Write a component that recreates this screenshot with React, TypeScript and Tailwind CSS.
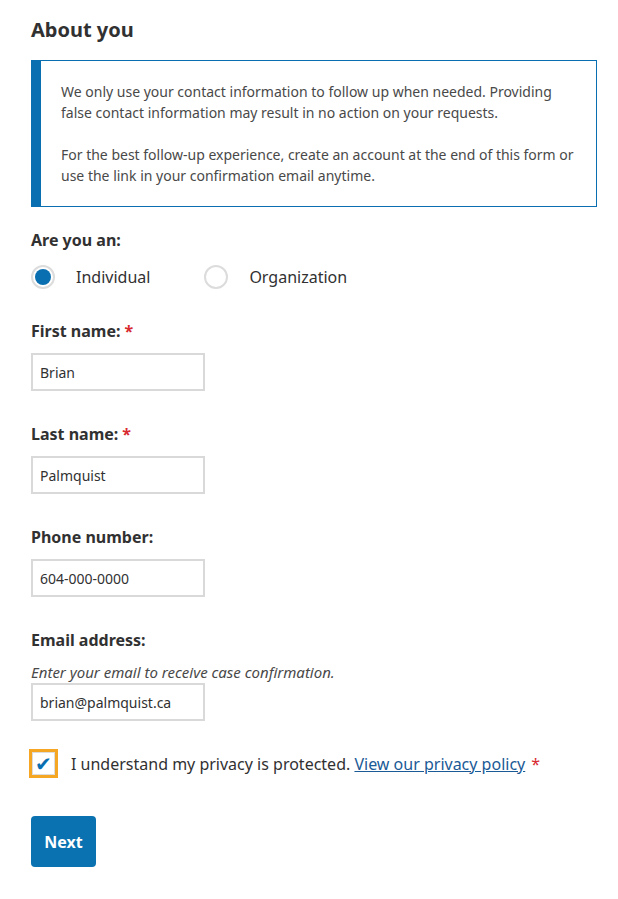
import { ReactNode } from 'react';

function Label({ children, required }: { children: ReactNode; required?: boolean }) {
  return (
    <div className="text-[16px] font-bold leading-[22px] text-[#313132]">
      {children}
      {required && <span className="ml-1 text-[#d8292f]">*</span>}
    </div>
  );
}

function TextInput({ value }: { value: string }) {
  return (
    <input
      type="text"
      defaultValue={value}
      className="h-[38px] w-[174px] border-2 border-[#d9d9d9] bg-white px-[7px] text-[14px] text-[#313132] outline-none"
    />
  );
}

function Radio({ label, checked }: { label: string; checked?: boolean }) {
  return (
    <label className="flex items-center">
      <span className="flex h-[24px] w-[24px] items-center justify-center rounded-full border-2 border-[#dcdcdc] bg-white">
        {checked && <span className="h-[16px] w-[16px] rounded-full bg-[#0a6fb0]" />}
      </span>
      <span className="ml-[21px] text-[16px] text-[#313132]">{label}</span>
    </label>
  );
}

export default function App() {
  return (
    <div className="min-h-[899px] bg-white px-[31px] pt-[16px] font-['Noto_Sans',sans-serif] text-[#313132]">
      <h2 className="text-[20px] font-bold leading-[28px]">About you</h2>

      <div className="mt-[16px] flex w-[566px] border border-[#0a6fb0] border-l-[10px]">
        <div className="px-[20px] pt-[20px] pb-[20px] text-[14px] leading-[21px] text-[#494949]">
          <p>
            We only use your contact information to follow up when needed. Providing false contact
            information may result in no action on your requests.
          </p>
          <p className="mt-[21px]">
            For the best follow-up experience, create an account at the end of this form or use the
            link in your confirmation email anytime.
          </p>
        </div>
      </div>

      <div className="mt-[22px]">
        <Label>Are you an:</Label>
        <div className="mt-[14px] flex gap-[54px]">
          <Radio label="Individual" checked />
          <Radio label="Organization" />
        </div>
      </div>

      <div className="mt-[31px] flex flex-col gap-[11px]">
        <Label required>First name:</Label>
        <TextInput value="Brian" />
      </div>

      <div className="mt-[32px] flex flex-col gap-[11px]">
        <Label required>Last name:</Label>
        <TextInput value="Palmquist" />
      </div>

      <div className="mt-[32px] flex flex-col gap-[11px]">
        <Label>Phone number:</Label>
        <TextInput value="604-000-0000" />
      </div>

      <div className="mt-[32px] flex flex-col">
        <Label>Email address:</Label>
        <div className="mt-[11px] text-[15px] italic leading-[20px] text-[#494949]">
          Enter your email to receive case confirmation.
        </div>
        <div className="mt-[1px]">
          <TextInput value="brian@palmquist.ca" />
        </div>
      </div>

      <div className="mt-[28px] -ml-[2px] flex items-center">
        <span className="flex h-[29px] w-[29px] items-center justify-center border-[3px] border-[#f5a623] bg-white">
          <span className="flex h-[23px] w-[23px] items-center justify-center border border-[#dcdcdc] text-[20px] leading-none text-[#0a6fb0]">
            ✔
          </span>
        </span>
        <span className="ml-[13px] text-[16px] text-[#313132]">
          I understand my privacy is protected.{' '}
          <a href="#" className="text-[#1a5a96] underline">
            View our privacy policy
          </a>
          <span className="ml-[6px] text-[#d8292f]">*</span>
        </span>
      </div>

      <button
        type="button"
        className="mt-[38px] block h-[51px] w-[65px] rounded-[4px] bg-[#0a72b1] text-[16px] font-bold text-white"
      >
        Next
      </button>
    </div>
  );
}
